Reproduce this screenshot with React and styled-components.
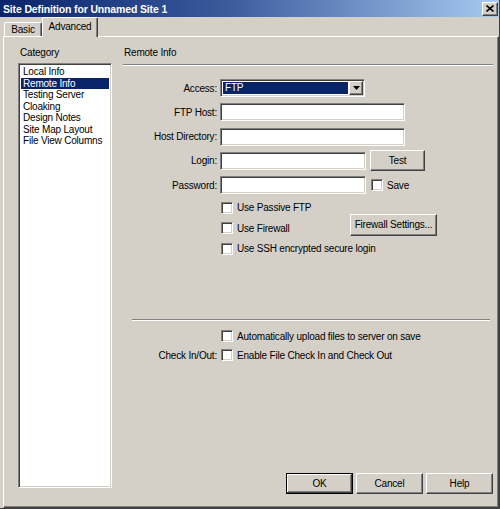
import React from "react";
import styled, { createGlobalStyle, css } from "styled-components";

const GlobalStyle = createGlobalStyle`
  html, body { margin: 0; padding: 0; background: #d4d0c8; }
  body { font-family: "Liberation Sans", Arial, sans-serif; font-size: 10px; letter-spacing: -0.2px; color: #000; }
  * { box-sizing: border-box; }
`;

const sunken = css`
  border-top: 1px solid #808080;
  border-left: 1px solid #808080;
  border-right: 1px solid #ffffff;
  border-bottom: 1px solid #ffffff;
  box-shadow: inset 1px 1px 0 #404040, inset -1px -1px 0 #d4d0c8;
`;

const raised = css`
  border-top: 1px solid #ffffff;
  border-left: 1px solid #ffffff;
  border-right: 1px solid #404040;
  border-bottom: 1px solid #404040;
  box-shadow: inset -1px -1px 0 #808080;
  background: #d4d0c8;
`;

const Window = styled.div`
  width: 500px;
  height: 509px;
  display: flex;
  flex-direction: column;
  background: #d4d0c8;
  border-right: 1px solid #404040;
  border-bottom: 1px solid #404040;
`;

const TitleBar = styled.div`
  height: 17px;
  flex: none;
  display: flex;
  align-items: center;
  justify-content: space-between;
  padding: 0 1px 0 3px;
  background: linear-gradient(to right, #0a246a 0%, #3a5a9c 45%, #a6caf0 100%);
`;

const TitleText = styled.span`
  color: #fff;
  font-weight: bold;
  font-size: 10.5px;
  letter-spacing: -0.15px;
`;

const CloseButton = styled.div`
  width: 16px;
  height: 14px;
  ${raised};
  display: flex;
  align-items: center;
  justify-content: center;
`;

const TabStrip = styled.div`
  height: 19px;
  flex: none;
  display: flex;
  align-items: flex-end;
  padding-left: 4px;
`;

const Tab = styled.div`
  position: relative;
  display: flex;
  align-items: center;
  justify-content: center;
  background: #d4d0c8;
  border-top: 1px solid #ffffff;
  border-left: 1px solid #ffffff;
  border-right: 1px solid #404040;
  border-radius: 2px 2px 0 0;
  box-shadow: inset -1px 0 0 #808080;
  width: ${(p) => p.$w}px;
  height: ${(p) => (p.$active ? 20 : 14)}px;
  margin-bottom: ${(p) => (p.$active ? -1 : 0)}px;
  z-index: ${(p) => (p.$active ? 2 : 1)};
  padding-bottom: ${(p) => (p.$active ? 2 : 0)}px;
`;

const Panel = styled.div`
  flex: 1;
  margin-left: 3px;
  display: flex;
  border-top: 1px solid #ffffff;
  border-left: 1px solid #ffffff;
  border-right: 1px solid #404040;
  border-bottom: 1px solid #404040;
  box-shadow: inset -1px -1px 0 #808080;
  padding: 10px 5px 13px 14px;
`;

const Sidebar = styled.div`
  width: 94px;
  flex: none;
  display: flex;
  flex-direction: column;
`;

const SectionLabel = styled.div`
  line-height: 12px;
  height: 12px;
  padding-left: ${(p) => p.$indent || 0}px;
`;

const ListBox = styled.div`
  flex: 1;
  margin-top: 4px;
  margin-bottom: 6px;
  background: #fff;
  ${sunken};
  padding: 2px 2px;
`;

const ListItem = styled.div`
  height: 11.5px;
  line-height: 11.5px;
  padding-left: 2px;
  white-space: nowrap;
  background: ${(p) => (p.$selected ? "#0a246a" : "transparent")};
  color: ${(p) => (p.$selected ? "#fff" : "#000")};
`;

const Main = styled.div`
  flex: 1;
  margin-left: 11px;
  display: flex;
  flex-direction: column;
`;

const Rule = styled.div`
  height: 2px;
  border-top: 1px solid #808080;
  border-bottom: 1px solid #ffffff;
  margin: ${(p) => p.$m};
`;

const Form = styled.div`
  margin-top: 10px;
  display: flex;
  flex-direction: column;
`;

const FieldRow = styled.div`
  height: 24.25px;
  display: flex;
  align-items: center;
`;

const FieldLabel = styled.div`
  width: 94px;
  flex: none;
  text-align: right;
  white-space: nowrap;
`;

const TextInput = styled.div`
  width: ${(p) => p.$w}px;
  height: 18px;
  margin-left: 3px;
  background: #fff;
  ${sunken};
`;

const Select = styled.div`
  width: 145px;
  height: 18px;
  margin-left: 3px;
  background: #fff;
  ${sunken};
  padding: 2px;
  display: flex;
`;

const SelectValue = styled.div`
  flex: 1;
  background: #0a246a;
  color: #fff;
  line-height: 12px;
  padding-left: 2px;
  margin-right: 1px;
`;

const DropButton = styled.div`
  width: 14px;
  margin: -1px -1px -1px 0;
  ${raised};
  display: flex;
  align-items: center;
  justify-content: center;
`;

const PushButton = styled.div`
  width: ${(p) => p.$w}px;
  height: ${(p) => p.$h || 21}px;
  flex: none;
  display: flex;
  align-items: center;
  justify-content: center;
  white-space: nowrap;
  margin-left: ${(p) => p.$ml || 0}px;
  margin-top: ${(p) => p.$mt || 0}px;
  ${raised};
  ${(p) =>
    p.$default &&
    css`
      outline: 1px solid #000;
      outline-offset: -1px;
      border-right-color: #000;
      border-bottom-color: #000;
      box-shadow: inset -1px -1px 0 #404040, inset 1px 1px 0 #ffffff, inset -2px -2px 0 #808080;
    `}
`;

const CheckRow = styled.div`
  height: ${(p) => p.$h}px;
  display: flex;
  align-items: center;
  padding-left: ${(p) => p.$indent || 0}px;
  margin-top: ${(p) => p.$mt || 0}px;
`;

const CheckBox = styled.div`
  width: 12px;
  height: 12px;
  flex: none;
  background: #fff;
  margin-left: ${(p) => p.$ml || 0}px;
  ${sunken};
`;

const CheckText = styled.span`
  margin-left: 4px;
  white-space: nowrap;
  width: ${(p) => (p.$w ? `${p.$w}px` : "auto")};
  flex: none;
`;

const Footer = styled.div`
  margin-top: auto;
  display: flex;
  justify-content: flex-end;
  gap: 3px;
`;

const categories = [
  "Local Info",
  "Remote Info",
  "Testing Server",
  "Cloaking",
  "Design Notes",
  "Site Map Layout",
  "File View Columns",
];

export default function App() {
  return (
    <>
      <GlobalStyle />
      <Window>
        <TitleBar>
          <TitleText>Site Definition for Unnamed Site 1</TitleText>
          <CloseButton>
            <svg width="8" height="7" viewBox="0 0 8 7">
              <path d="M0.5 0.5 L7.5 6.5 M7.5 0.5 L0.5 6.5" stroke="#000" strokeWidth="1.6" />
            </svg>
          </CloseButton>
        </TitleBar>
        <TabStrip>
          <Tab $w={38}>Basic</Tab>
          <Tab $w={56} $active>Advanced</Tab>
        </TabStrip>
        <Panel>
          <Sidebar>
            <SectionLabel $indent={2}>Category</SectionLabel>
            <ListBox>
              {categories.map((c) => (
                <ListItem key={c} $selected={c === "Remote Info"}>
                  {c}
                </ListItem>
              ))}
            </ListBox>
          </Sidebar>
          <Main>
            <SectionLabel $indent={1}>Remote Info</SectionLabel>
            <Rule $m="5px 0 0 0" />
            <Form>
              <FieldRow>
                <FieldLabel>Access:</FieldLabel>
                <Select>
                  <SelectValue>FTP</SelectValue>
                  <DropButton>
                    <svg width="7" height="4" viewBox="0 0 7 4">
                      <path d="M0 0 H7 L3.5 4 Z" fill="#000" />
                    </svg>
                  </DropButton>
                </Select>
              </FieldRow>
              <FieldRow>
                <FieldLabel>FTP Host:</FieldLabel>
                <TextInput $w={185} />
              </FieldRow>
              <FieldRow>
                <FieldLabel>Host Directory:</FieldLabel>
                <TextInput $w={185} />
              </FieldRow>
              <FieldRow>
                <FieldLabel>Login:</FieldLabel>
                <TextInput $w={146} />
                <PushButton $w={55} $ml={4}>Test</PushButton>
              </FieldRow>
              <FieldRow>
                <FieldLabel>Password:</FieldLabel>
                <TextInput $w={146} />
                <CheckBox $ml={5} />
                <CheckText>Save</CheckText>
              </FieldRow>
            </Form>
            <CheckRow $h={20.5} $indent={98}>
              <CheckBox />
              <CheckText>Use Passive FTP</CheckText>
            </CheckRow>
            <CheckRow $h={20.5} $indent={98}>
              <CheckBox />
              <CheckText $w={113}>Use Firewall</CheckText>
              <PushButton $w={87} $h={22} $mt={-7}>Firewall Settings...</PushButton>
            </CheckRow>
            <CheckRow $h={20.5} $indent={98}>
              <CheckBox />
              <CheckText>Use SSH encrypted secure login</CheckText>
            </CheckRow>
            <Rule $m="60px 3px 0 9px" />
            <CheckRow $h={19} $indent={98} $mt={6}>
              <CheckBox />
              <CheckText>Automatically upload files to server on save</CheckText>
            </CheckRow>
            <CheckRow $h={19}>
              <FieldLabel>Check In/Out:</FieldLabel>
              <CheckBox $ml={4} />
              <CheckText>Enable File Check In and Check Out</CheckText>
            </CheckRow>
            <Footer>
              <PushButton $w={67} $default>OK</PushButton>
              <PushButton $w={67}>Cancel</PushButton>
              <PushButton $w={67}>Help</PushButton>
            </Footer>
          </Main>
        </Panel>
      </Window>
    </>
  );
}
